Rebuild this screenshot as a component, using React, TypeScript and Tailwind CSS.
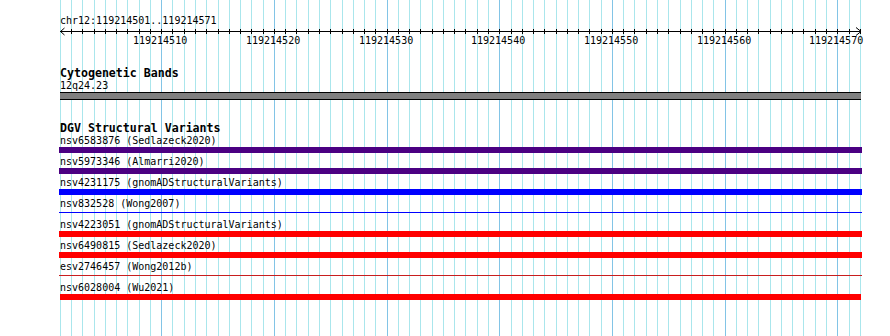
import React from "react";

const START = 119214501;
const N = 72;
const xs = Array.from({ length: N }, (_, k) => Math.floor(60.3 + k * 11.268));

type Row = { label: string; color: string; thin?: boolean; short?: boolean };
const rows: Row[] = [
  { label: "nsv6583876 (Sedlazeck2020)", color: "bg-[#4b0082]" },
  { label: "nsv5973346 (Almarri2020)", color: "bg-[#4b0082]" },
  { label: "nsv4231175 (gnomADStructuralVariants)", color: "bg-[#0000ff]" },
  { label: "nsv832528 (Wong2007)", color: "bg-[#0000ff]", thin: true },
  { label: "nsv4223051 (gnomADStructuralVariants)", color: "bg-[#ff0000]" },
  { label: "nsv6490815 (Sedlazeck2020)", color: "bg-[#ff0000]" },
  { label: "esv2746457 (Wong2012b)", color: "bg-[#c81e1e]", thin: true },
  { label: "nsv6028004 (Wu2021)", color: "bg-[#ff0000]", short: true },
];

function Grid() {
  return (
    <div className="absolute inset-0 pointer-events-none">
      {xs.map((x, k) => {
        const major = (START + k) % 10 === 0;
        return (
          <div
            key={k}
            className={`absolute top-0 bottom-0 w-px ${major ? "bg-[#82c4e6]" : "bg-[#aae6ec]"}`}
            style={{ left: x }}
          />
        );
      })}
    </div>
  );
}

function Ruler() {
  const majors = xs
    .map((x, k) => ({ x, pos: START + k }))
    .filter((d) => d.pos % 10 === 0);
  return (
    <div className="relative h-[20px] -ml-[60px] w-[890px]">
      <svg
        className="absolute left-0 top-0"
        width={890}
        height={20}
        viewBox="0 27 890 20"
        shapeRendering="crispEdges"
      >
        <line x1={60} y1={31.5} x2={861} y2={31.5} stroke="#000" strokeWidth={1} />
        {xs.slice(1).map((x, i) => (
          <line key={i} x1={x + 0.5} y1={29} x2={x + 0.5} y2={34} stroke="#000" strokeWidth={1} />
        ))}
        <polyline points="64.5,28 60.5,31.5 64.5,35" fill="none" stroke="#000" strokeWidth={1} shapeRendering="auto" />
        <polyline points="856,27.5 861,31.5 856,35.5" fill="none" stroke="#000" strokeWidth={1} shapeRendering="auto" />
      </svg>
      {majors.map((d) => (
        <div
          key={d.pos}
          className="absolute top-[7.5px] text-[10px] leading-[12px] text-black whitespace-nowrap"
          style={{ left: d.x - 28 }}
        >
          {d.pos}
        </div>
      ))}
    </div>
  );
}

export default function App() {
  return (
    <div className="relative w-[890px] h-[336px] bg-white overflow-hidden font-['DejaVu_Sans_Mono',monospace] text-black">
      <Grid />
      <div className="relative flex flex-col pl-[60px] pt-[15px]">
        <div className="text-[10px] leading-[12px] whitespace-nowrap">chr12:119214501..119214571</div>
        <Ruler />

        <div className="mt-[20px] text-[11.6px] leading-[13px] font-bold whitespace-nowrap">Cytogenetic Bands</div>
        <div className="text-[10px] leading-[12px] whitespace-nowrap">12q24.23</div>
        <div className="w-[801px] h-[8px] bg-[#808080] border-y border-black" />

        <div className="mt-[22px] text-[11.6px] leading-[13px] font-bold whitespace-nowrap">DGV Structural Variants</div>
        {rows.map((r, i) => (
          <div key={i} className="flex flex-col mb-[3px]">
            <div className="text-[10px] leading-[12px] whitespace-nowrap">{r.label}</div>
            {r.thin ? (
              <div className="h-[6px] -ml-px w-[803px] flex flex-col pt-[2px]">
                <div className={`h-px w-full ${r.color}`} />
              </div>
            ) : r.short ? (
              <div className={`h-[6px] w-[801px] ${r.color}`} />
            ) : (
              <div className={`h-[6px] -ml-px w-[803px] ${r.color}`} />
            )}
          </div>
        ))}
      </div>
    </div>
  );
}
